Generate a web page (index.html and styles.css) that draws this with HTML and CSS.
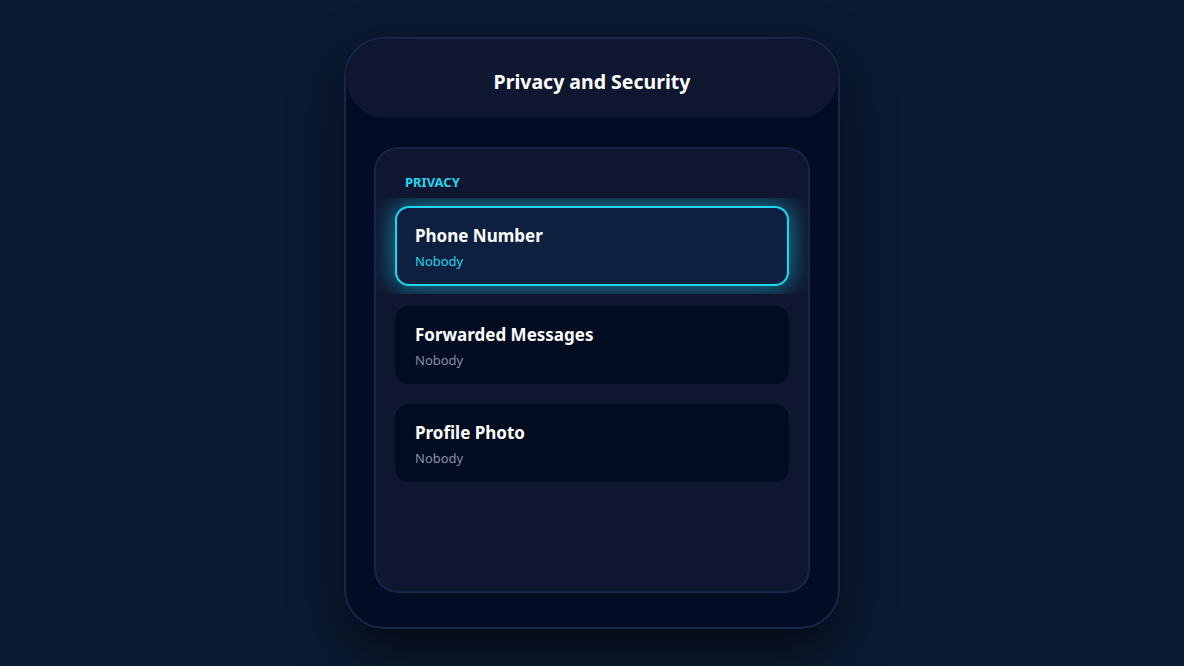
FILE: index.html
```html
<!DOCTYPE html>
<html lang="en">
<head>
  <meta charset="UTF-8">
  <title>Privacy and Security</title>
  <link rel="stylesheet" href="styles.css">
</head>
<body>
  <div class="phone">
    <header class="phone-header">
      <h1>Privacy and Security</h1>
    </header>

    <section class="settings-card">
      <div class="section-label">PRIVACY</div>

      <div class="setting-list">
        <div class="setting-row active">
          <div class="setting">
            <div class="setting-title">Phone Number</div>
            <div class="setting-value">Nobody</div>
          </div>
        </div>
        <div class="setting-row">
          <div class="setting">
            <div class="setting-title">Forwarded Messages</div>
            <div class="setting-value">Nobody</div>
          </div>
        </div>
        <div class="setting-row">
          <div class="setting">
            <div class="setting-title">Profile Photo</div>
            <div class="setting-value">Nobody</div>
          </div>
        </div>
      </div>
    </section>
  </div>
</body>
</html>
```

FILE: styles.css
```css
* {
  box-sizing: border-box;
}

html, body {
  height: 100%;
}

body {
  margin: 0;
  background-color: #0b1a31;
  font-family: "Noto Sans", "Open Sans", sans-serif;
  color: #fff;
  display: flex;
  align-items: center;
  justify-content: center;
}

.phone {
  width: 496px;
  height: 592px;
  background-color: #020c22;
  border: 2px solid #13284a;
  border-radius: 40px;
  box-shadow: 0 22px 50px rgba(0, 0, 0, 0.6);
  display: flex;
  flex-direction: column;
  overflow: hidden;
}

.phone-header {
  height: 79px;
  padding-top: 6px;
  background-color: #0e1630;
  border-radius: 38px 38px 40px 40px;
  display: flex;
  align-items: center;
  justify-content: center;
  flex-shrink: 0;
}

.phone-header h1 {
  margin: 0;
  font-size: 19.5px;
  font-weight: 700;
}

.settings-card {
  flex: 1;
  margin: 29px 28px 34px;
  background-color: #0f1730;
  border: 2px solid #15264a;
  border-radius: 24px;
  padding-top: 24px;
  overflow: hidden;
}

.section-label {
  padding: 0 29px;
  color: #1fd6ef;
  font-size: 13px;
  font-weight: 700;
  line-height: 18px;
  margin-bottom: 7px;
}

.setting-list {
  display: flex;
  flex-direction: column;
  gap: 4px;
}

.setting-row {
  padding: 8px 19px;
  overflow: hidden;
}

.setting {
  height: 78px;
  background-color: #020c20;
  border: 2px solid transparent;
  border-radius: 14px;
  padding: 15px 18px;
  display: flex;
  flex-direction: column;
  gap: 4px;
}

.setting-title {
  font-size: 17px;
  font-weight: 700;
  line-height: 24px;
}

.setting-value {
  font-size: 13px;
  line-height: 18px;
  color: #8591a6;
}

.setting-row.active .setting {
  height: 80px;
  padding: 16px 18px;
  background-color: #0e2040;
  border-color: #1fd6ef;
  box-shadow: 0 0 26px 2px rgba(31, 214, 239, 0.55);
}

.setting-row.active .setting-value {
  color: #1fd6ef;
}
```
